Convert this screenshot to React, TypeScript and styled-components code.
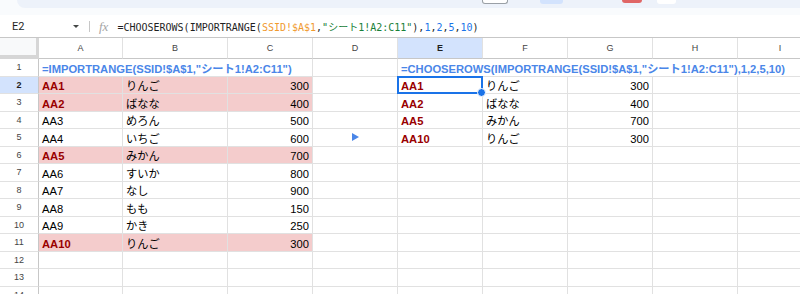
import React from "react";
import styled, { createGlobalStyle } from "styled-components";

const GlobalStyle = createGlobalStyle`
  html, body { margin: 0; padding: 0; background: #fff; overflow: hidden; }
  #root { width: 800px; height: 294px; }
`;

const Frame = styled.div`
  width: 800px;
  height: 294px;
  overflow: hidden;
  display: flex;
  flex-direction: column;
  background: #fff;
  font-family: "Liberation Sans", Arial, "Noto Sans CJK JP", sans-serif;
`;

const TopStrip = styled.div`
  height: 15px;
  flex: none;
  background: #f9fbfd;
  padding-left: 17px;
  display: flex;
  align-items: flex-start;
`;

const ToolbarPill = styled.div`
  flex: 1;
  height: 8px;
  background: #edf2fa;
  border-bottom-left-radius: 8px;
  display: flex;
  align-items: flex-start;
`;

const ToolBit = styled.span<{ $gap: number; $w: number; $h: number; $color: string; $outline?: boolean }>`
  flex: none;
  margin-left: ${(p) => p.$gap}px;
  width: ${(p) => p.$w}px;
  height: ${(p) => p.$h}px;
  background: ${(p) => p.$color};
  border-radius: 0 0 3px 3px;
  box-sizing: border-box;
  border: ${(p) => (p.$outline ? "1px solid #9aa0a6" : "none")};
  border-top: none;
`;

const FormulaBar = styled.div`
  height: 23px;
  flex: none;
  box-sizing: border-box;
  display: flex;
  align-items: center;
  background: #fff;
  border-bottom: 1px solid #c7c7c7;
`;

const NameBox = styled.div`
  width: 89px;
  flex: none;
  box-sizing: border-box;
  display: flex;
  align-items: center;
  justify-content: space-between;
  padding: 0 10px 0 12px;
  font-family: Roboto, "Liberation Sans", sans-serif;
  font-size: 11px;
  color: #1f1f1f;
`;

const Caret = styled.span`
  width: 0;
  height: 0;
  border-left: 3px solid transparent;
  border-right: 3px solid transparent;
  border-top: 3px solid #444746;
`;

const Divider = styled.span`
  width: 1px;
  height: 11px;
  background: #c7c7c7;
  flex: none;
`;

const Fx = styled.span`
  margin-left: 9px;
  font-family: "Liberation Serif", serif;
  font-style: italic;
  font-size: 13px;
  color: #a5a5a5;
  line-height: 1;
  flex: none;
`;

const FormulaText = styled.div`
  margin-left: 9px;
  font-family: "DejaVu Sans Mono", "Noto Sans CJK JP", monospace;
  font-size: 10px;
  color: #1f1f1f;
  white-space: nowrap;
`;

const Tok = styled.span<{ $c: string }>`
  color: ${(p) => p.$c};
`;

const Sheet = styled.div`
  display: grid;
  grid-template-columns: 39px 84px 105px 85px 85px 85px 85px 85px 85px 85px;
  grid-template-rows: 21px repeat(14, 17.5px);
  width: max-content;
`;

const Corner = styled.div`
  box-sizing: border-box;
  background: #f8f9fa;
  border-right: 3px solid #d6d6d6;
  border-bottom: 4px solid #d6d6d6;
`;

const ColHeader = styled.div<{ $active?: boolean }>`
  box-sizing: border-box;
  display: flex;
  align-items: center;
  justify-content: center;
  background: ${(p) => (p.$active ? "#d3e3fd" : "#fff")};
  border-right: 1px solid #e1e1e1;
  border-bottom: 1px solid #c7c7c7;
  font-size: 9px;
  font-weight: ${(p) => (p.$active ? 700 : 400)};
  color: ${(p) => (p.$active ? "#1f1f1f" : "#444")};
`;

const RowHeader = styled.div<{ $active?: boolean }>`
  box-sizing: border-box;
  display: flex;
  align-items: center;
  justify-content: center;
  background: ${(p) => (p.$active ? "#d3e3fd" : "#fff")};
  border-right: 1px solid #c7c7c7;
  border-bottom: 1px solid #e1e1e1;
  font-size: 9px;
  font-weight: ${(p) => (p.$active ? 700 : 400)};
  color: ${(p) => (p.$active ? "#1f1f1f" : "#444")};
`;

type Align = "left" | "right" | "center";

const Cell = styled.div<{
  $span?: number;
  $bg?: string;
  $align?: Align;
  $bold?: boolean;
  $color?: string;
  $middle?: boolean;
}>`
  position: relative;
  box-sizing: border-box;
  grid-column: span ${(p) => p.$span ?? 1};
  display: flex;
  align-items: ${(p) => (p.$middle ? "center" : "flex-end")};
  justify-content: ${(p) =>
    p.$align === "right" ? "flex-end" : p.$align === "center" ? "center" : "flex-start"};
  padding: 0 3px 0 3px;
  background: ${(p) => p.$bg ?? "#fff"};
  border-right: 1px solid #e1e1e1;
  border-bottom: 1px solid #e1e1e1;
  font-size: 11.2px;
  line-height: 13px;
  font-weight: ${(p) => (p.$bold ? 700 : 400)};
  color: ${(p) => p.$color ?? "#000"};
  white-space: nowrap;
`;

const Selection = styled.div`
  position: absolute;
  top: -1px;
  left: -1px;
  right: -1px;
  bottom: -1px;
  border: 2px solid #1a73e8;
  z-index: 2;
  pointer-events: none;
`;

const FillHandle = styled.span`
  position: absolute;
  right: -5px;
  bottom: -5px;
  width: 7px;
  height: 7px;
  border-radius: 50%;
  background: #1a73e8;
  border: 1px solid #fff;
`;

const Marker = styled.span`
  width: 0;
  height: 0;
  border-top: 4px solid transparent;
  border-bottom: 4px solid transparent;
  border-left: 7px solid #4a86e8;
`;

const PINK = "#f4cccc";
const RED = "#990000";
const BLUE = "#4a86e8";

type Row = { id: string; name: string; price: string; hl: boolean };

const source: Row[] = [
  { id: "AA1", name: "りんご", price: "300", hl: true },
  { id: "AA2", name: "ばなな", price: "400", hl: true },
  { id: "AA3", name: "めろん", price: "500", hl: false },
  { id: "AA4", name: "いちご", price: "600", hl: false },
  { id: "AA5", name: "みかん", price: "700", hl: true },
  { id: "AA6", name: "すいか", price: "800", hl: false },
  { id: "AA7", name: "なし", price: "900", hl: false },
  { id: "AA8", name: "もも", price: "150", hl: false },
  { id: "AA9", name: "かき", price: "250", hl: false },
  { id: "AA10", name: "りんご", price: "300", hl: true },
];

const chosen: Row[] = [source[0], source[1], source[4], source[9]];

const letters = ["A", "B", "C", "D", "E", "F", "G", "H", "I"];

export default function App() {
  const rows: React.ReactNode[] = [];

  rows.push(
    <React.Fragment key="r1">
      <RowHeader>1</RowHeader>
      <Cell $span={3} $bold $color={BLUE}>
        =IMPORTRANGE(SSID!$A$1,"シート1!A2:C11")
      </Cell>
      <Cell />
      <Cell $span={5} $bold $color={BLUE}>
        =CHOOSEROWS(IMPORTRANGE(SSID!$A$1,"シート1!A2:C11"),1,2,5,10)
      </Cell>
    </React.Fragment>
  );

  for (let r = 2; r <= 14; r++) {
    const src = source[r - 2];
    const out = chosen[r - 2];
    const bg = src && src.hl ? PINK : undefined;
    rows.push(
      <React.Fragment key={"r" + r}>
        <RowHeader $active={r === 2}>{r}</RowHeader>
        <Cell $bg={bg} $bold={src?.hl} $color={src?.hl ? RED : "#000"}>
          {src?.id}
        </Cell>
        <Cell $bg={bg}>{src?.name}</Cell>
        <Cell $bg={bg} $align="right">
          {src?.price}
        </Cell>
        <Cell $align="center" $middle>
          {r === 5 && <Marker />}
        </Cell>
        <Cell $bold $color={RED}>
          {out?.id}
          {r === 2 && (
            <Selection>
              <FillHandle />
            </Selection>
          )}
        </Cell>
        <Cell>{out?.name}</Cell>
        <Cell $align="right">{out?.price}</Cell>
        <Cell />
        <Cell />
      </React.Fragment>
    );
  }

  return (
    <>
      <GlobalStyle />
      <Frame>
        <TopStrip>
          <ToolbarPill>
            <ToolBit $gap={465} $w={26} $h={4} $color="#fff" $outline />
            <ToolBit $gap={32} $w={23} $h={4} $color="#d3e3fd" />
            <ToolBit $gap={59} $w={20} $h={3} $color="#e06666" />
            <ToolBit $gap={15} $w={19} $h={4} $color="#fff" />
          </ToolbarPill>
        </TopStrip>
        <FormulaBar>
          <NameBox>
            E2
            <Caret />
          </NameBox>
          <Divider />
          <Fx>fx</Fx>
          <FormulaText>
            =CHOOSEROWS(IMPORTRANGE(
            <Tok $c="#f09a2f">SSID!$A$1</Tok>,
            <Tok $c="#188038">"シート1!A2:C11"</Tok>),
            <Tok $c="#1a73e8">1</Tok>,<Tok $c="#1a73e8">2</Tok>,
            <Tok $c="#1a73e8">5</Tok>,<Tok $c="#1a73e8">10</Tok>)
          </FormulaText>
        </FormulaBar>
        <Sheet>
          <Corner />
          {letters.map((l) => (
            <ColHeader key={l} $active={l === "E"}>
              {l}
            </ColHeader>
          ))}
          {rows}
        </Sheet>
      </Frame>
    </>
  );
}
